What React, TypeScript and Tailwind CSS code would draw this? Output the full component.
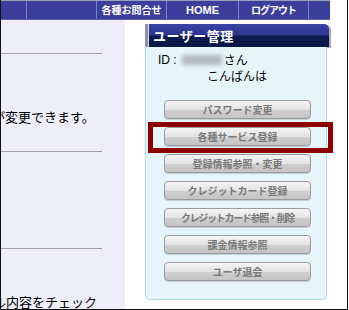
import React from "react";

const buttons = [
  { label: "パスワード変更", cls: "" },
  { label: "各種サービス登録", cls: "" },
  { label: "登録情報参照・変更", cls: "" },
  { label: "クレジットカード登録", cls: "" },
  { label: "クレジットカード参照・削除", cls: "tracking-[-1.3px]" },
  { label: "課金情報参照", cls: "" },
  { label: "ユーザ退会", cls: "" },
];

function Sep() {
  return <div className="w-px h-full bg-[#7d82c4] shrink-0" />;
}

export default function App() {
  return (
    <div className="relative w-[349px] h-[310px] bg-white overflow-hidden font-['Liberation_Sans','Noto_Sans_CJK_JP',sans-serif]">
      <div className="w-[348px] h-[310px] border-l border-r border-b border-[#111] flex flex-col">
        {/* top nav */}
        <div className="flex h-[20px] shrink-0">
          <div className="w-[329px] h-full flex items-stretch bg-[#3b3e9b] border-t border-t-[#9aa2bc] border-b border-b-[#5a5eb0] text-white font-bold">
            <div className="w-[25px]" />
            <Sep />
            <div className="w-[69px]" />
            <Sep />
            <div className="w-[69px] flex items-center justify-center text-[10px]">各種お問合せ</div>
            <Sep />
            <div className="w-[71px] flex items-center justify-center text-[11px]">HOME</div>
            <Sep />
            <div className="w-[69px] flex items-center justify-center text-[10px] tracking-[-1px]">ログアウト</div>
            <Sep />
            <div className="flex-1" />
          </div>
        </div>

        {/* body */}
        <div className="flex flex-1 min-h-0">
          {/* left column */}
          <div className="w-[124px] h-full bg-[#eeeefa] overflow-hidden flex flex-col font-['Noto_Sans_CJK_JP',sans-serif] text-black">
            <div className="mt-[33px] w-[101px] h-[2px] bg-[#a3a3a3]" />
            <div className="mt-[55px] ml-[-9px] text-[13px] leading-[15px] whitespace-nowrap">が変更できます。</div>
            <div className="mt-[27px] w-[101px] h-[2px] bg-[#a3a3a3]" />
            <div className="mt-[97px] w-[101px] h-[2px] bg-[#a3a3a3]" />
            <div className="mt-[45px] ml-[-8px] text-[13px] leading-[15px] whitespace-nowrap">ル内容をチェック</div>
          </div>

          <div className="w-[20px]" />

          {/* user panel */}
          <div className="w-[186px] mt-[4px] flex flex-col">
            <div className="w-[184px] h-[23px] rounded-tr-[5px] flex items-center bg-[linear-gradient(#3a44a4_0%,#2c3590_48%,#0c1a4e_52%,#0a1646_100%)] border-l-[3px] border-l-[#8c93aa] shadow-[2px_1px_1px_rgba(0,0,0,0.35)]">
              <div className="w-px h-full bg-[#d8dcec]" />
              <span className="ml-[4px] text-white font-bold text-[13px] tracking-[0.5px] font-['Noto_Sans_CJK_JP',sans-serif]">ユーザー管理</span>
            </div>
            <div className="w-[182px] h-[253px] bg-[#e5f5fa] border border-t-0 border-[#a6dcea] rounded-b-[5px] flex flex-col font-['Noto_Sans_CJK_JP',sans-serif] text-black">
              <div className="flex items-center mt-[6px] ml-[12px] h-[14px] text-[12px] leading-[14px]">
                <span className="font-['Liberation_Sans',sans-serif] text-[12px]">ID :</span>
                <div className="ml-[5px] w-[40px] h-[10px] bg-[#b4b8bc] blur-[2px]" />
                <span className="ml-[2px]">さん</span>
              </div>
              <div className="ml-[61px] mt-[2px] text-[12px] leading-[14px]">こんばんは</div>
              <div className="mt-[17px] ml-[18px] flex flex-col gap-[8px]">
                {buttons.map((b) => (
                  <div
                    key={b.label}
                    className={`w-[147px] h-[19px] rounded-[4px] border border-[#9c9c9c] bg-[linear-gradient(#f6f6f6_0%,#e2e2e2_50%,#cfcfcf_55%,#c4c4c4_100%)] shadow-[0_1px_0_rgba(0,0,0,0.15)] flex items-center justify-center text-[10px] font-bold text-[#7a7a7a] whitespace-nowrap ${b.cls}`}
                  >
                    {b.label}
                  </div>
                ))}
              </div>
            </div>
          </div>
        </div>
      </div>

      {/* highlight annotation */}
      <div className="absolute left-[148px] top-[122px] w-[185px] h-[31px] border-[5px] border-[#8c0000]" />
    </div>
  );
}
